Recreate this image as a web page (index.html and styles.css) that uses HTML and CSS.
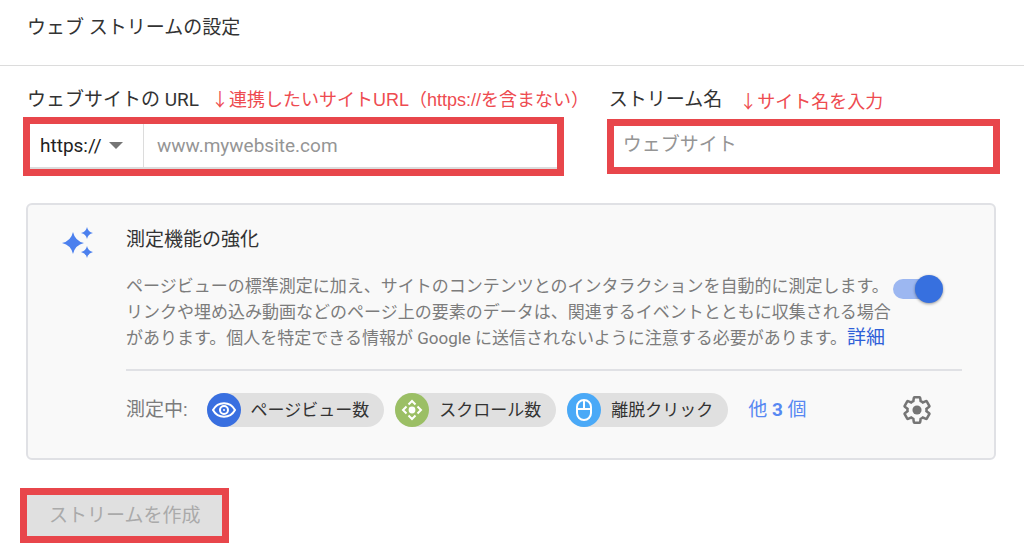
FILE: index.html
```html
<!DOCTYPE html>
<html lang="ja">
<head>
    <meta charset="UTF-8">
    <meta name="viewport" content="width=device-width, initial-scale=1.0">
    <title>ウェブ ストリームの設定</title>
    <link rel="stylesheet" href="styles.css">
</head>
<body>
    <header class="header">
        <h1>ウェブ ストリームの設定</h1>
    </header>
    <main>
        <form>
            <div class="fields">
                <div class="field">
                    <div class="field__head">
                        <label for="site-url">ウェブサイトの URL</label>
                        <span class="note"><span class="arrow">↓</span>連携したいサイトURL（https://を含まない）</span>
                    </div>
                    <div class="box box--url">
                        <div class="protocol">
                            <select name="protocol" aria-label="プロトコル">
                                <option>https://</option>
                                <option>http://</option>
                            </select>
                            <svg class="protocol__arrow" viewBox="0 0 14 7" aria-hidden="true"><path d="M0 0h14L7 7z"/></svg>
                        </div>
                        <input type="text" id="site-url" name="url" placeholder="www.mywebsite.com">
                    </div>
                </div>
                <div class="field">
                    <div class="field__head field__head--name">
                        <label for="stream-name">ストリーム名</label>
                        <span class="note note--name"><span class="arrow">↓</span>サイト名を入力</span>
                    </div>
                    <div class="box box--name">
                        <input type="text" id="stream-name" name="name" placeholder="ウェブサイト">
                    </div>
                </div>
            </div>

            <section class="card">
                <svg class="card__icon" viewBox="0 0 32 32" aria-hidden="true">
                    <path d="M11 5Q13 14 22 16Q13 18 11 27Q9 18 0 16Q9 14 11 5z"/>
                    <path d="M25 0Q26 5 31 6Q26 7 25 12Q24 7 19 6Q24 5 25 0z"/>
                    <path d="M25 19Q26 24 31 25Q26 26 25 31Q24 26 19 25Q24 24 25 19z"/>
                </svg>
                <div class="card__body">
                    <h2 id="enhanced">測定機能の強化</h2>
                    <div class="description">
                        <p>ページビューの標準測定に加え、サイトのコンテンツとのインタラクションを自動的に測定します。<br>リンクや埋め込み動画などのページ上の要素のデータは、関連するイベントとともに収集される場合<br>があります。個人を特定できる情報が Google に送信されないように注意する必要があります。<a href="#">詳細</a></p>
                        <input type="checkbox" class="toggle" aria-labelledby="enhanced" checked>
                    </div>
                    <div class="measuring">
                        <span class="measuring__label">測定中:</span>
                        <ul class="chips">
                            <li class="chip">
                                <svg class="chip__icon chip__icon--view" viewBox="0 0 34 34" aria-hidden="true">
                                    <path d="M6 17C11 8 23 8 28 17C23 26 11 26 6 17z"/>
                                    <circle cx="17" cy="17" r="4"/>
                                    <circle class="dot" cx="17" cy="17" r="1"/>
                                </svg>
                                ページビュー数
                            </li>
                            <li class="chip">
                                <svg class="chip__icon chip__icon--scroll" viewBox="0 0 34 34" aria-hidden="true">
                                    <path d="M13.5 11.5l3.5-3.5 3.500 3.500M22.500 13.500l3.500 3.500-3.500 3.500M20.500 22.500l-3.500 3.500-3.500-3.500M11.500 20.500l-3.500-3.500 3.500-3.500"/>
                                    <circle class="dot" cx="17" cy="17" r="3.400"/>
                                </svg>
                                スクロール数
                            </li>
                            <li class="chip">
                                <svg class="chip__icon chip__icon--click" viewBox="0 0 34 34" aria-hidden="true">
                                    <rect x="10" y="7" width="14" height="20" rx="7"/>
                                    <path d="M10 16h14M17 7v9"/>
                                </svg>
                                離脱クリック
                            </li>
                        </ul>
                        <a href="#" class="more">他 <b>3</b> 個</a>
                        <button type="button" class="settings" aria-label="設定">
                            <svg viewBox="1 1 22 22" aria-hidden="true">
                                <path d="M19.43 12.98c.04-.32.07-.64.07-.98 0-.34-.03-.66-.07-.98l2.11-1.65c.19-.15.24-.42.12-.64l-2-3.46c-.09-.16-.26-.25-.44-.25-.06 0-.12.01-.17.03l-2.49 1c-.52-.4-1.08-.73-1.69-.98l-.38-2.65C14.46 2.18 14.25 2 14 2h-4c-.25 0-.46.18-.49.42l-.38 2.65c-.61.25-1.17.59-1.69.98l-2.49-1c-.06-.02-.12-.03-.18-.03-.17 0-.34.09-.43.25l-2 3.46c-.13.22-.07.49.12.64l2.11 1.65c-.04.32-.07.65-.07.98 0 .33.03.66.07.98l-2.11 1.65c-.19.15-.24.42-.12.64l2 3.46c.09.16.26.25.44.25.06 0 .12-.01.17-.03l2.49-1c.52.4 1.08.73 1.69.98l.38 2.65c.03.24.24.42.49.42h4c.25 0 .46-.18.49-.42l.38-2.65c.61-.25 1.17-.59 1.69-.98l2.49 1c.06.02.12.03.18.03.17 0 .34-.09.43-.25l2-3.46c.12-.22.07-.49-.12-.64l-2.11-1.65z"/>
                                <circle cx="12" cy="12" r="3.6"/>
                            </svg>
                        </button>
                    </div>
                </div>
            </section>

            <button type="submit" class="create" disabled>ストリームを作成</button>
        </form>
    </main>
</body>
</html>
```
FILE: styles.css
```css
* {
    box-sizing: border-box;
}
body {
    margin: 0;
    background-color: #fff;
    color: #333;
    font-family: Roboto, "Noto Sans CJK JP", sans-serif;
    font-size: 19px;
    line-height: 28px;
}
h1, h2, p, ul {
    margin: 0;
    padding: 0;
}
h1, h2 {
    font-size: 19px;
    font-weight: 400;
}
a {
    color: #2f5fd8;
    text-decoration: none;
}
input, select, button {
    font: inherit;
}
.header {
    padding: 14px 27px 23px;
    border-bottom: 1px solid #dcdcdc;
}
main {
    padding: 20px 24px 3px 20px;
}

/* 入力欄 */
.fields {
    display: grid;
    grid-template-columns: minmax(0, 11fr) minmax(0, 8fr);
    column-gap: 43px;
    margin-left: 3px;
}
.field__head {
    display: flex;
    height: 31px;
    padding-left: 4px;
    gap: 12px;
    white-space: nowrap;
}
.field__head--name {
    height: 33px;
    padding-left: 2px;
    gap: 17px;
}
.note {
    color: #ee4b50;
    font-family: "Liberation Sans", "Noto Sans CJK JP", sans-serif;
    font-size: 18px;
}
.note--name {
    padding-top: 2px;
}
.arrow {
    font-family: "Noto Sans CJK JP", sans-serif;
    line-height: 1;
}
.box {
    display: flex;
    border: 7px solid #e8464b;
    background-color: #fff;
}
.box--url {
    height: 59px;
}
.box--name {
    height: 55px;
    padding-bottom: 4px;
}
.box input {
    flex: 1;
    min-width: 0;
    padding: 0 13px;
    border: 0;
    background: none;
    outline: none;
}
.box--name input {
    padding: 0 9px;
}
.box--url input {
    border-bottom: 2px solid #dcdcdc;
}
.box input::placeholder {
    color: #959595;
    opacity: 1;
}
.protocol {
    display: flex;
    align-items: center;
    width: 114px;
    border-right: 1px solid #dcdcdc;
    border-bottom: 2px solid #dcdcdc;
}
.protocol select {
    width: 100%;
    height: 100%;
    padding: 0 10px;
    border: 0;
    appearance: none;
    background: none;
    color: #222;
}
.protocol__arrow {
    flex: none;
    width: 14px;
    height: 7px;
    margin-left: -34px;
    margin-right: 20px;
    fill: #757575;
    pointer-events: none;
}

/* 測定機能の強化 */
.card {
    display: flex;
    gap: 32px;
    margin: 27px 4px 28px 6px;
    padding: 21px 32px 31px 34px;
    border: 2px solid #e0e1e5;
    border-radius: 6px;
    background-color: #f9f9f9;
}
.card__icon {
    flex: none;
    width: 32px;
    height: 32px;
    margin-top: 1px;
    fill: #4c80ee;
}
.card__body {
    flex: 1;
    min-width: 0;
}
.description {
    display: flex;
    justify-content: space-between;
    padding: 19px 19px 18px 0;
    border-bottom: 2px solid #e0e1e5;
}
.description p {
    color: #7c7c7c;
    font-size: 17px;
    line-height: 26px;
    white-space: nowrap;
}
.description a {
    font-size: 19px;
}
.toggle {
    flex: none;
    display: flex;
    align-items: center;
    width: 50px;
    height: 28px;
    margin: 2px 0 0;
    appearance: none;
}
.toggle::before {
    content: "";
    width: 44px;
    height: 20px;
    border-radius: 10px;
    background-color: #9cb7f1;
}
.toggle::after {
    content: "";
    flex: none;
    width: 28px;
    height: 28px;
    margin-left: -22px;
    border-radius: 50%;
    background-color: #3770df;
    box-shadow: 0 1px 3px rgba(0, 0, 0, 0.4);
}
.measuring {
    display: flex;
    align-items: center;
    padding-top: 22px;
}
.measuring__label {
    margin-right: 19px;
    color: #7c7c7c;
}
.chips {
    display: flex;
    gap: 11px;
    list-style: none;
}
.chip {
    display: flex;
    align-items: center;
    gap: 10px;
    height: 34px;
    padding-right: 15px;
    border-radius: 17px;
    background-color: #e0e0e0;
    font-size: 17px;
    white-space: nowrap;
}
.chip__icon {
    width: 34px;
    height: 34px;
    border-radius: 50%;
    fill: none;
    stroke: #fff;
    stroke-width: 2;
}
.chip__icon .dot {
    fill: #fff;
    stroke: none;
}
.chip__icon--view {
    background-color: #396fe0;
}
.chip__icon--scroll {
    background-color: #9bbf65;
}
.chip__icon--click {
    background-color: #4aa9f7;
}
.more {
    margin-left: 20px;
    color: #5788f2;
}
.more b {
    font-weight: 700;
}
.settings {
    width: 28px;
    height: 28px;
    margin-left: auto;
    margin-right: 31px;
    padding: 0;
    border: 0;
    background: none;
}
.settings svg {
    display: block;
    fill: none;
    stroke: #757575;
    stroke-width: 2;
}
.settings circle {
    fill: #757575;
    stroke: none;
}

.create {
    display: block;
    height: 55px;
    padding: 0 22px;
    border: 7px solid #e8464b;
    background-color: #e0e0e0;
    color: #aaa;
}
```
